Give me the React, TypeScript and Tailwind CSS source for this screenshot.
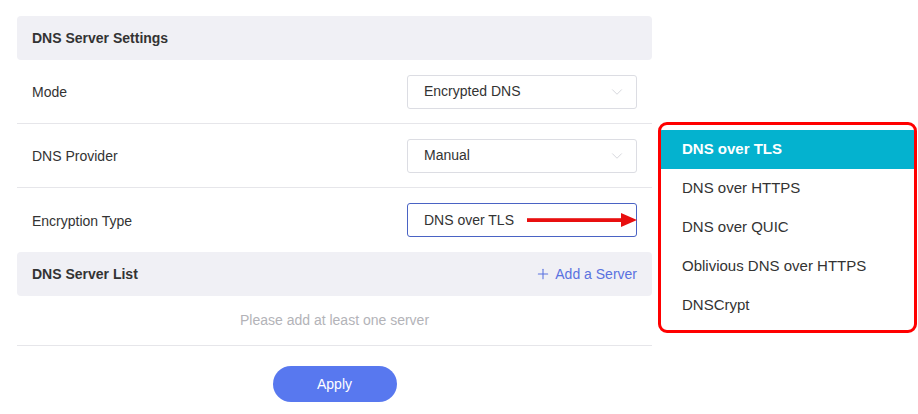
import { ChevronDown, Plus } from "lucide-react";

const rows = [
  { label: "Mode", value: "Encrypted DNS", active: false },
  { label: "DNS Provider", value: "Manual", active: false },
  { label: "Encryption Type", value: "DNS over TLS", active: true },
];

const options = ["DNS over TLS", "DNS over HTTPS", "DNS over QUIC", "Oblivious DNS over HTTPS", "DNSCrypt"];

const App = () => {
  return (
    <div className="relative w-[918px] h-[414px] bg-white font-['Liberation_Sans',Arial,sans-serif] text-[14px] text-[#333]">
      <div className="pt-4 pl-[17px] w-[652px]">
        <div className="h-11 flex items-center px-[15px] rounded bg-[#f0f0f5] font-bold text-[#333]">
          DNS Server Settings
        </div>
        {rows.map((row, i) => (
          <div
            key={row.label}
            className={`h-[64px] flex items-center justify-between px-[15px] ${i < 2 ? "border-b border-[#e6e6ea]" : ""}`}
          >
            <span className="pt-0.5">{row.label}</span>
            <div
              className={`relative w-[230px] h-[34px] flex items-center pl-4 pr-2.5 rounded-[3px] border ${row.active ? "border-[#4a63c4]" : "border-[#dcdde3]"}`}
            >
              <span className="flex-1">{row.value}</span>
              {row.active ? (
                <svg width="112" height="14" viewBox="0 0 112 14" className="absolute left-[119px] top-[9px]">
                  <rect x="0" y="5.2" width="96" height="3.8" fill="#e80f0f" />
                  <polygon points="94,0 110,7 94,14" fill="#e80f0f" />
                </svg>
              ) : (
                <ChevronDown size={18} strokeWidth={1} className="text-[#c8cad0]" />
              )}
            </div>
          </div>
        ))}
        <div className="h-11 flex items-center justify-between px-[15px] rounded bg-[#f0f0f5]">
          <span className="font-bold">DNS Server List</span>
          <span className="flex items-center gap-1 text-[#5a72e0]">
            <Plus size={16} strokeWidth={1.6} />
            Add a Server
          </span>
        </div>
        <div className="h-[50px] flex items-center justify-center border-b border-[#e6e6ea] text-[#b3b3b8]">
          Please add at least one server
        </div>
        <div className="flex justify-center pt-5">
          <button className="w-[124px] h-9 rounded-full bg-[#5878ef] text-white text-[14px]">Apply</button>
        </div>
      </div>

      <div className="absolute left-[658px] top-[122px] w-[259px] h-[211px] rounded-[9px] border-[3px] border-[#ff0000] bg-white overflow-hidden">
        <div className="mt-[5px]">
          {options.map((opt, i) => (
            <div
              key={opt}
              className={`h-[39px] flex items-center pl-[21px] text-[15px] ${i === 0 ? "bg-[#04b2cf] text-white font-bold" : "text-[#333]"}`}
            >
              {opt}
            </div>
          ))}
        </div>
      </div>
    </div>
  );
};

export default App;
